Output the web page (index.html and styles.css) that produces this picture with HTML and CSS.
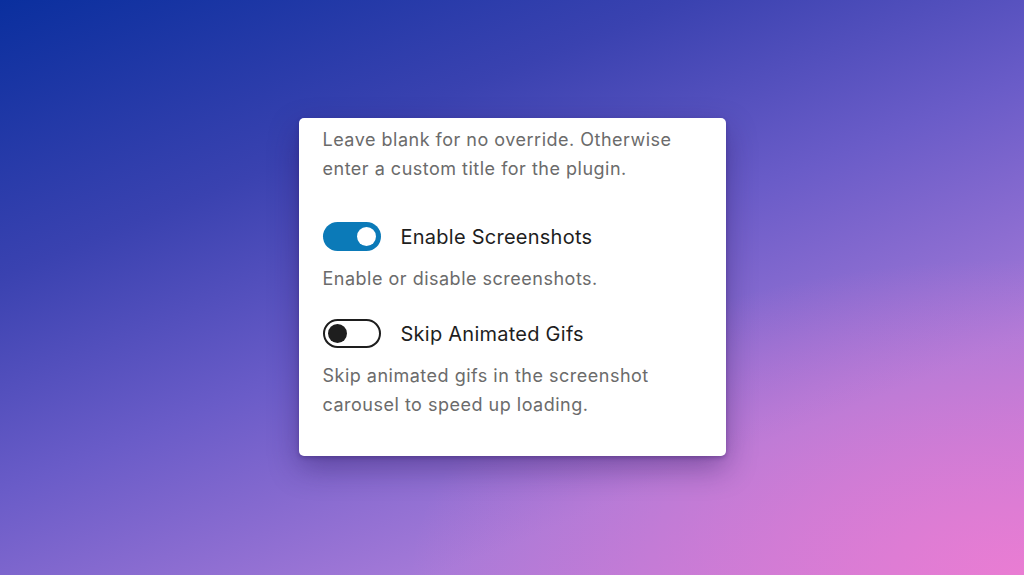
FILE: index.html
```html
<!DOCTYPE html>
<html>
<head>
<meta charset="utf-8">
<link rel="stylesheet" href="styles.css">
</head>
<body>
<main class="stage">
  <section class="card">
    <p class="help">Leave blank for no override. Otherwise enter a custom title for the plugin.</p>
    <div class="field">
      <label class="toggle-row">
        <span class="toggle on"><span class="knob"></span></span>
        <span class="label">Enable Screenshots</span>
      </label>
      <p class="help">Enable or disable screenshots.</p>
    </div>
    <div class="field">
      <label class="toggle-row">
        <span class="toggle off"><span class="knob"></span></span>
        <span class="label">Skip Animated Gifs</span>
      </label>
      <p class="help">Skip animated gifs in the screenshot carousel to speed up loading.</p>
    </div>
  </section>
</main>
</body>
</html>
```
FILE: styles.css
```css
* { box-sizing: border-box; }
html, body { margin: 0; padding: 0; }
body {
  width: 1024px;
  height: 575px;
  overflow: hidden;
  font-family: Inter, "Noto Sans", sans-serif;
}
.stage {
  width: 1024px;
  height: 575px;
  display: flex;
  justify-content: center;
  align-items: flex-start;
  padding-top: 118px;
  background:
    radial-gradient(ellipse 60% 55% at 100% 100%, rgba(240,125,210,0.85), rgba(240,125,210,0) 100%),
    linear-gradient(158deg, #0a2f9e 0%, #3a42b0 28%, #6a5cc8 50%, #a67ad8 76%, #c27ad8 100%);
}
.card {
  width: 427px;
  height: 338px;
  background: #fff;
  border-radius: 5px;
  padding: 7px 24px 0 24px;
  box-shadow: 0 12px 30px rgba(40, 20, 90, 0.4), 0 2px 4px rgba(40, 20, 90, 0.3);
}
.help {
  margin: 0;
  font-size: 18px;
  line-height: 29px;
  color: #6b6b6b;
  letter-spacing: 0.5px;
}
.field { margin-top: 39px; }
.field + .field { margin-top: 26px; }
.toggle-row {
  display: flex;
  align-items: center;
  gap: 20px;
  height: 29px;
  margin-bottom: 13px;
}
.label {
  font-size: 20px;
  color: #1e1e1e;
  letter-spacing: 0.25px;
}
.toggle {
  width: 58px;
  height: 29px;
  border-radius: 15px;
  display: flex;
  align-items: center;
  padding: 0 5px;
}
.toggle.on {
  background: #0b7ab8;
  justify-content: flex-end;
}
.toggle.off {
  border: 2px solid #1e1e1e;
  justify-content: flex-start;
  padding: 0 3px;
}
.knob {
  width: 19px;
  height: 19px;
  border-radius: 50%;
}
.toggle.on .knob { background: #fff; }
.toggle.off .knob { background: #1e1e1e; }
```
